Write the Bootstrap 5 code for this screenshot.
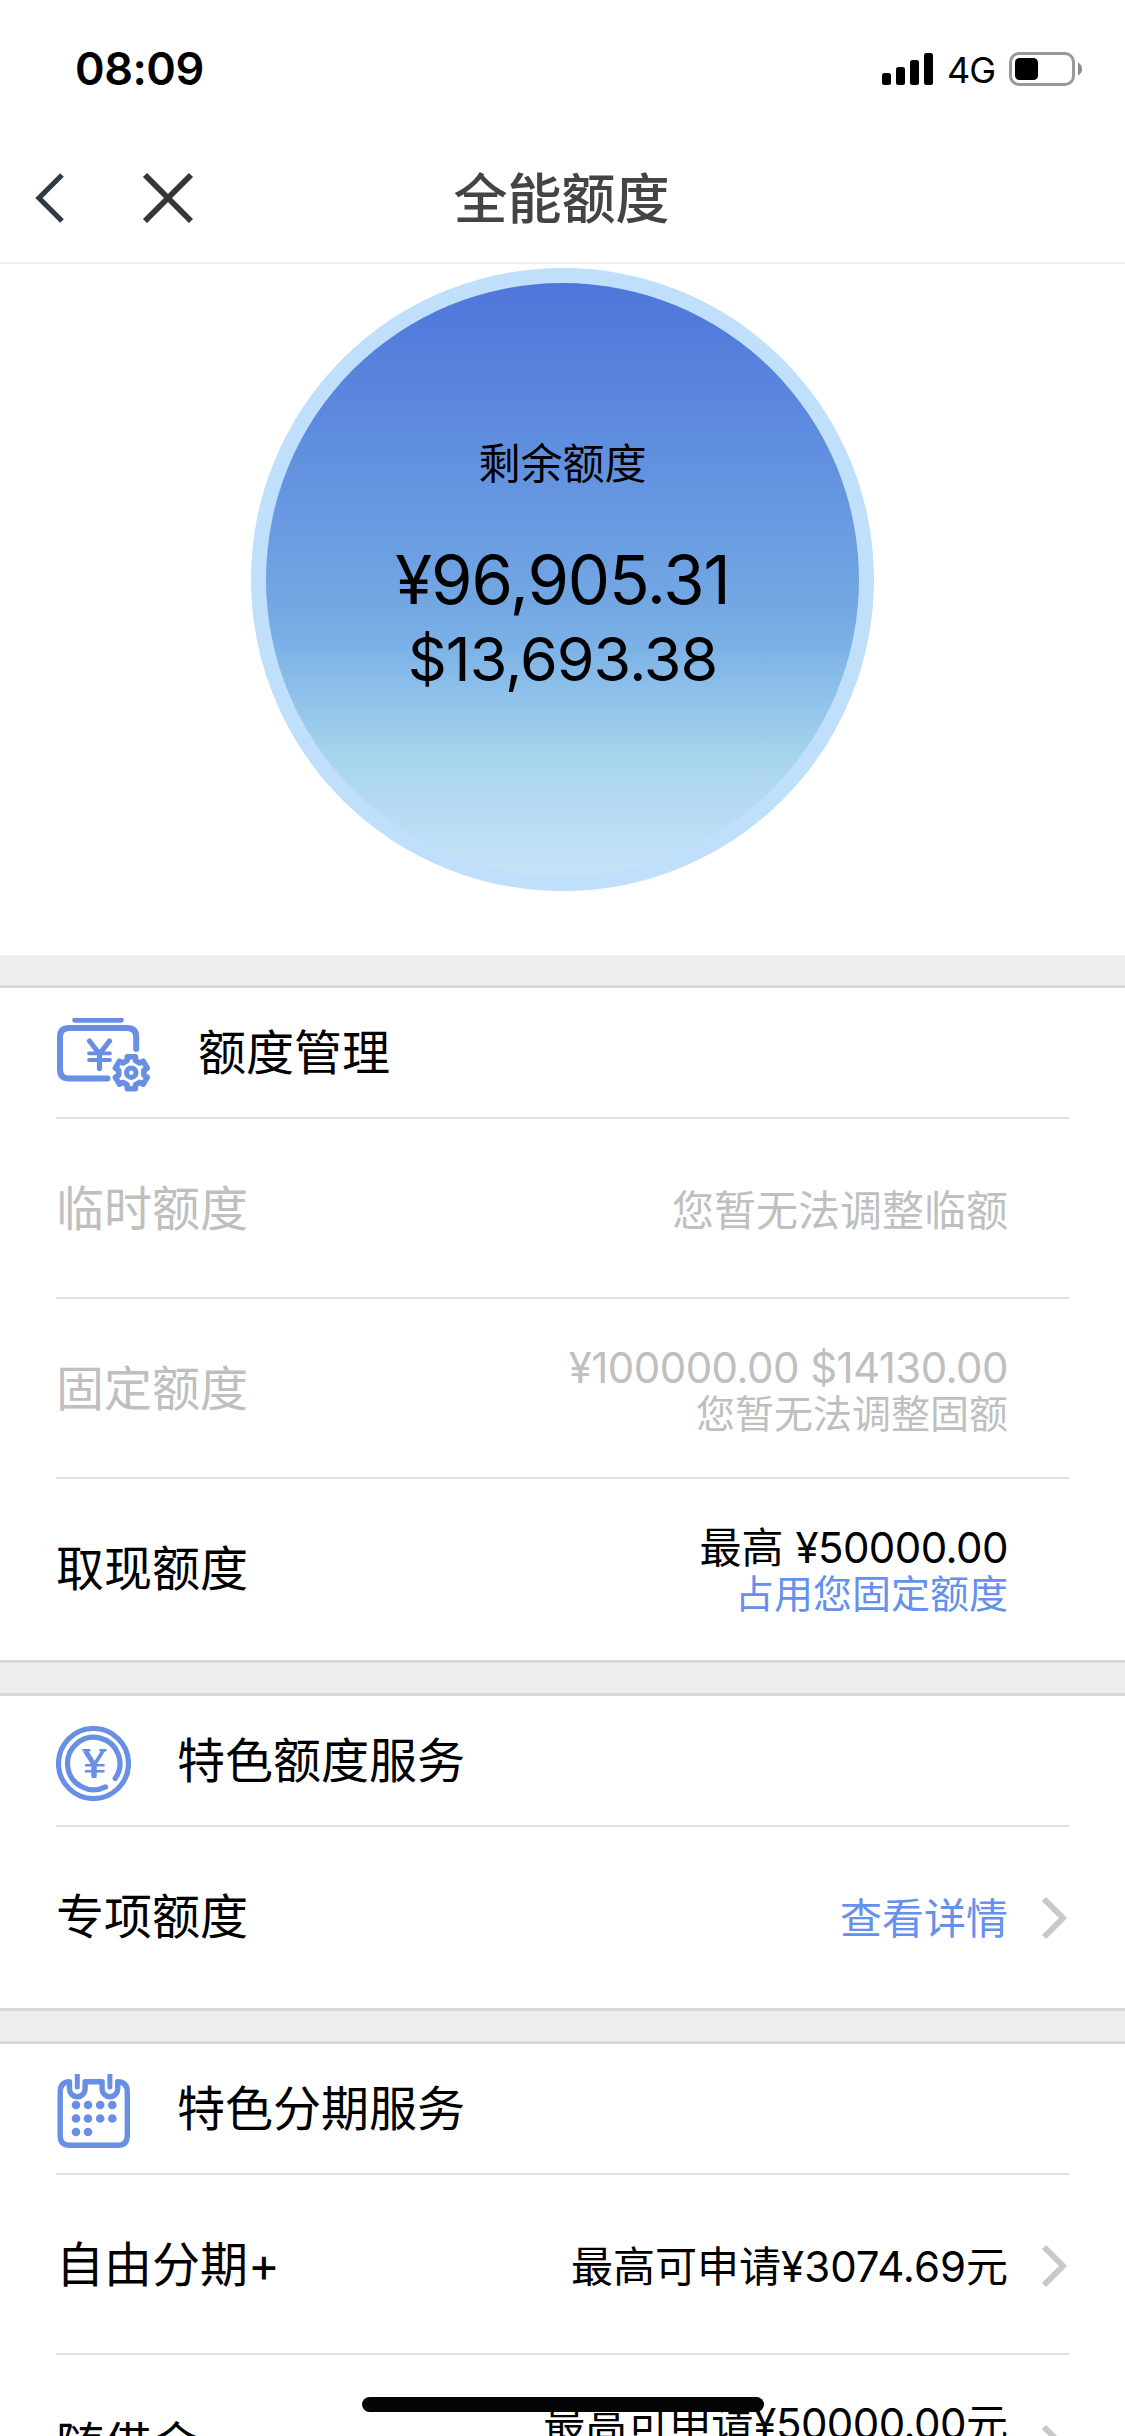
<!DOCTYPE html>
<html lang="zh-CN">
<head>
<meta charset="utf-8">
<meta name="viewport" content="width=device-width, initial-scale=1">
<title>全能额度</title>
<link href="https://cdn.jsdelivr.net/npm/bootstrap@5.3.0/dist/css/bootstrap.min.css" rel="stylesheet">
<style>
  :root { --line: #d9d9d9; --accent: #6590ec; --icon: #698fe5; }
  html, body { height: 2436px; overflow: hidden; }
  body { background: #fff; color: #000; font-family: Inter, "Noto Sans CJK SC", sans-serif; line-height: 1; }
  svg { display: block; flex: none; }
  .status-bar { height: 132px; padding: 0 42px 0 75px; }
  .clock { font-size: 45px; font-weight: 600; letter-spacing: -.5px; padding-top: 5px; }
  .status-icons { padding-top: 6px; }
  .network { font-size: 36px; letter-spacing: -1px; margin: 2px 14px 0 13px; }
  .title-bar { height: 132px; padding: 2px 37px 0 35px; border-bottom: 2px solid #eee; }
  .title-side { width: 200px; }
  .page-title { font-size: 54px; font-weight: 500; color: #444; line-height: 1; padding-top: 4px; }
  .hero { height: 691px; padding-top: 4px; }
  .dial { width: 623px; height: 623px; border: 15px solid #c0dffb; background: #c0dffb; }
  .dial-face { padding-top: 160px; background: linear-gradient(#4e76da 0%, #5b88de 21%, #73a8e3 55%, #7bb1e6 61%, #92c4eb 71%, #a7d5ee 80%, #b2d9f1 86%, #c7e3f8 100%); }
  .dial-label { font-size: 42px; height: 42px; line-height: 42px; }
  .dial-cny { font-size: 67px; line-height: 80px; margin-top: 55px; letter-spacing: -1.1px; }
  .dial-usd { font-size: 61px; line-height: 72px; margin-top: 3px; letter-spacing: -1px; }
  .divider { height: 33px; background: #eee; border-bottom: 3px solid var(--line); }
  .divider-full { height: 36px; border-top: 3px solid var(--line); }
  .section-list { padding: 0 56px; }
  .section-head { height: 131px; gap: 46px; border-bottom: 2px solid #e0e0e0; }
  .section-head svg { margin-top: 6px; }
  .section-head h2 { font-size: 48px; font-weight: 400; line-height: 1; margin: 0; }
  .limit-row { height: 180px; border-bottom: 2px solid #e0e0e0; font-size: 48px; }
  .limit-row.last-row { height: 181px; border-bottom: 0; }
  .row-label { margin-top: 2px; }
  .last-row .row-label { margin: 0 0 2px; }
  .limit-row svg { margin-top: 3px; }
  .last-row svg { margin-top: 1px; }
  .limit-row .value { font-size: 42px; line-height: 47px; margin: 4px 0 0 auto; padding-right: 61px; text-align: right; white-space: nowrap; }
  .last-row .value { margin-top: 2px; }
  .limit-row .value.linked { padding-right: 33px; }
  .limit-row .note { font-size: 39px; line-height: 46px; }
  .amount { letter-spacing: -.55px; }
  .muted-row { color: #bfbfbf; }
  .accent { color: var(--accent); }
  .home-bar { left: 362px; top: 2397px; width: 402px; height: 15px; background: #050505; }
</style>
</head>
<body>
<svg width="0" height="0" class="position-absolute">
  <symbol id="chevron" viewBox="0 0 28 44"><path d="M3 3 22 22 3 41" fill="none" stroke="#c7c7cc" stroke-width="5.8"/></symbol>
</svg>

<header>
  <div class="status-bar d-flex align-items-center justify-content-between">
    <div class="clock">08:09</div>
    <div class="status-icons d-flex align-items-center">
      <svg width="52" height="32" viewBox="0 0 52 32"><rect x="0" y="20" width="9" height="12" rx="2.5"/><rect x="14" y="14" width="9" height="18" rx="2.5"/><rect x="28" y="7" width="9" height="25" rx="2.5"/><rect x="42" y="0" width="9" height="32" rx="2.5"/></svg>
      <span class="network">4G</span>
      <svg width="74" height="34" viewBox="0 0 74 34"><rect x="1.5" y="1.5" width="63" height="31" rx="8.5" fill="none" stroke="#999" stroke-width="3"/><rect x="6" y="6" width="23" height="22" rx="4.5"/><path d="M69 10.500q4 2 4 6.500t-4 6.500z" fill="#8c8c8c"/></svg>
    </div>
  </div>
  <nav class="title-bar d-flex align-items-center justify-content-between">
    <div class="title-side d-flex align-items-center">
      <svg width="158" height="50" viewBox="0 0 158 50" fill="none"><path d="M27 2 4 25l23 23" stroke="#303948" stroke-width="5.200"/><path d="m110 2 46 46M156 2l-46 46" stroke="#363636" stroke-width="5.800"/></svg>
    </div>
    <h1 class="page-title mb-0">全能额度</h1>
    <div class="title-side"></div>
  </nav>
</header>

<main>
  <section class="hero d-flex justify-content-center">
    <div class="dial rounded-circle">
      <div class="dial-face rounded-circle w-100 h-100 text-center">
        <div class="dial-label">剩余额度</div>
        <div class="dial-cny">¥96,905.31</div>
        <div class="dial-usd">$13,693.38</div>
      </div>
    </div>
  </section>

  <div class="divider"></div>
  <section class="section-list">
    <div class="section-head d-flex align-items-center">
      <svg width="96" height="75" viewBox="0 0 96 75" fill="none" stroke="#698fe5" stroke-linecap="round" stroke-linejoin="round">
        <path d="M19 2h46" stroke-width="5.400"/>
        <path d="M80.200 31V19q0-9-9-9H13q-9 0-9 9v32.500q0 9 9 9h38.500" stroke-width="6"/>
        <path d="m33.500 23 10 13 10-13M43.500 36v14.500" stroke-width="5.200"/>
        <path d="M33 35.300h21M33 42h21" stroke-width="3.800"/>
        <g transform="translate(75.300 54.700)" stroke-width="5.600"><path d="M-4.200-12.100-4-16H4L4.200-12.100 8.400-9.700 11.900-11.500 15.900-4.600 12.600-2.400V2.400L15.900 4.600 11.900 11.500 8.400 9.700 4.200 12.100 4 16H-4L-4.200 12.100-8.400 9.700-11.900 11.500-15.900 4.600-12.600 2.400V-2.400L-15.900-4.600-11.900-11.500-8.400-9.700Z"/><circle r="4.700" stroke-width="5"/></g>
      </svg>
      <h2>额度管理</h2>
    </div>
    <div class="limit-row muted-row d-flex align-items-center">
      <span class="row-label">临时额度</span>
      <div class="value">您暂无法调整临额</div>
    </div>
    <div class="limit-row muted-row d-flex align-items-center">
      <span class="row-label">固定额度</span>
      <div class="value"><div class="amount">¥100000.00 $14130.00</div><div class="note">您暂无法调整固额</div></div>
    </div>
    <div class="limit-row last-row d-flex align-items-center">
      <span class="row-label">取现额度</span>
      <div class="value"><div>最高 <span class="amount">¥50000.00</span></div><div class="note accent">占用您固定额度</div></div>
    </div>
  </section>

  <div class="divider divider-full"></div>
  <section class="section-list">
    <div class="section-head d-flex align-items-center">
      <svg width="75" height="75" viewBox="0 0 75 75" fill="none" stroke="#698fe5" stroke-linecap="round">
        <circle cx="37.500" cy="37.500" r="35" stroke-width="5.200"/>
        <path d="M59.200 52.500A26.200 26.200 0 1 0 49.500 60.900" stroke-width="5.200"/>
        <path d="m29.500 25 8.500 13.500V50" stroke-width="5" stroke-linecap="butt"/>
        <path d="M47 25 38.500 38.500" stroke-width="3.600"/>
        <path d="M27.500 24.300h6M44.500 24.300h5M30 39.300h17.500M30 45.200h17.500" stroke-width="2.600"/>
        <path d="M38 38v14" stroke-width="5" stroke-linecap="butt"/>
      </svg>
      <h2>特色额度服务</h2>
    </div>
    <div class="limit-row last-row d-flex align-items-center">
      <span class="row-label">专项额度</span>
      <div class="value linked accent">查看详情</div>
      <svg width="28" height="44"><use href="#chevron"/></svg>
    </div>
  </section>

  <div class="divider divider-full"></div>
  <section class="section-list">
    <div class="section-head d-flex align-items-center">
      <svg width="75" height="75" viewBox="0 0 75 75" fill="none" stroke="#698fe5" stroke-width="5.400">
        <path d="M13.500 7.700V15a7.800 7.800 0 0 0 15.600 0V7.700h17V15a7.800 7.800 0 0 0 15.600 0V7.700Q71.300 8 71.300 18V61.500q0 9.800-9.800 9.800H14Q4.200 71.300 4.200 61.500V18Q4.200 8 13.500 7.700Z" stroke-linejoin="round"/>
        <path d="M21.300 0v13M53.900 0v13" stroke-width="5" stroke-linecap="round"/>
        <path d="M20 31h.01M32 31h.01M44.200 31h.01M56.300 31h.01M20 44.500h.01M32 44.500h.01M44.200 44.500h.01M56.300 44.500h.01M20 58h.01M32 58h.01" stroke-width="8.600" stroke-linecap="round"/>
      </svg>
      <h2>特色分期服务</h2>
    </div>
    <div class="limit-row d-flex align-items-center">
      <span class="row-label">自由分期+</span>
      <div class="value linked">最高可申请¥3074.69元</div>
      <svg width="28" height="44"><use href="#chevron"/></svg>
    </div>
    <div class="limit-row d-flex align-items-center">
      <span class="row-label">随借金</span>
      <div class="value linked"><div>最高可申请<span class="amount">¥50000.00</span>元</div><div class="note">&nbsp;</div></div>
      <svg width="28" height="44"><use href="#chevron"/></svg>
    </div>
  </section>
</main>
<div class="home-bar position-fixed rounded-pill"></div>
<script src="https://cdn.jsdelivr.net/npm/bootstrap@5.3.0/dist/js/bootstrap.bundle.min.js"></script>
</body>
</html>
